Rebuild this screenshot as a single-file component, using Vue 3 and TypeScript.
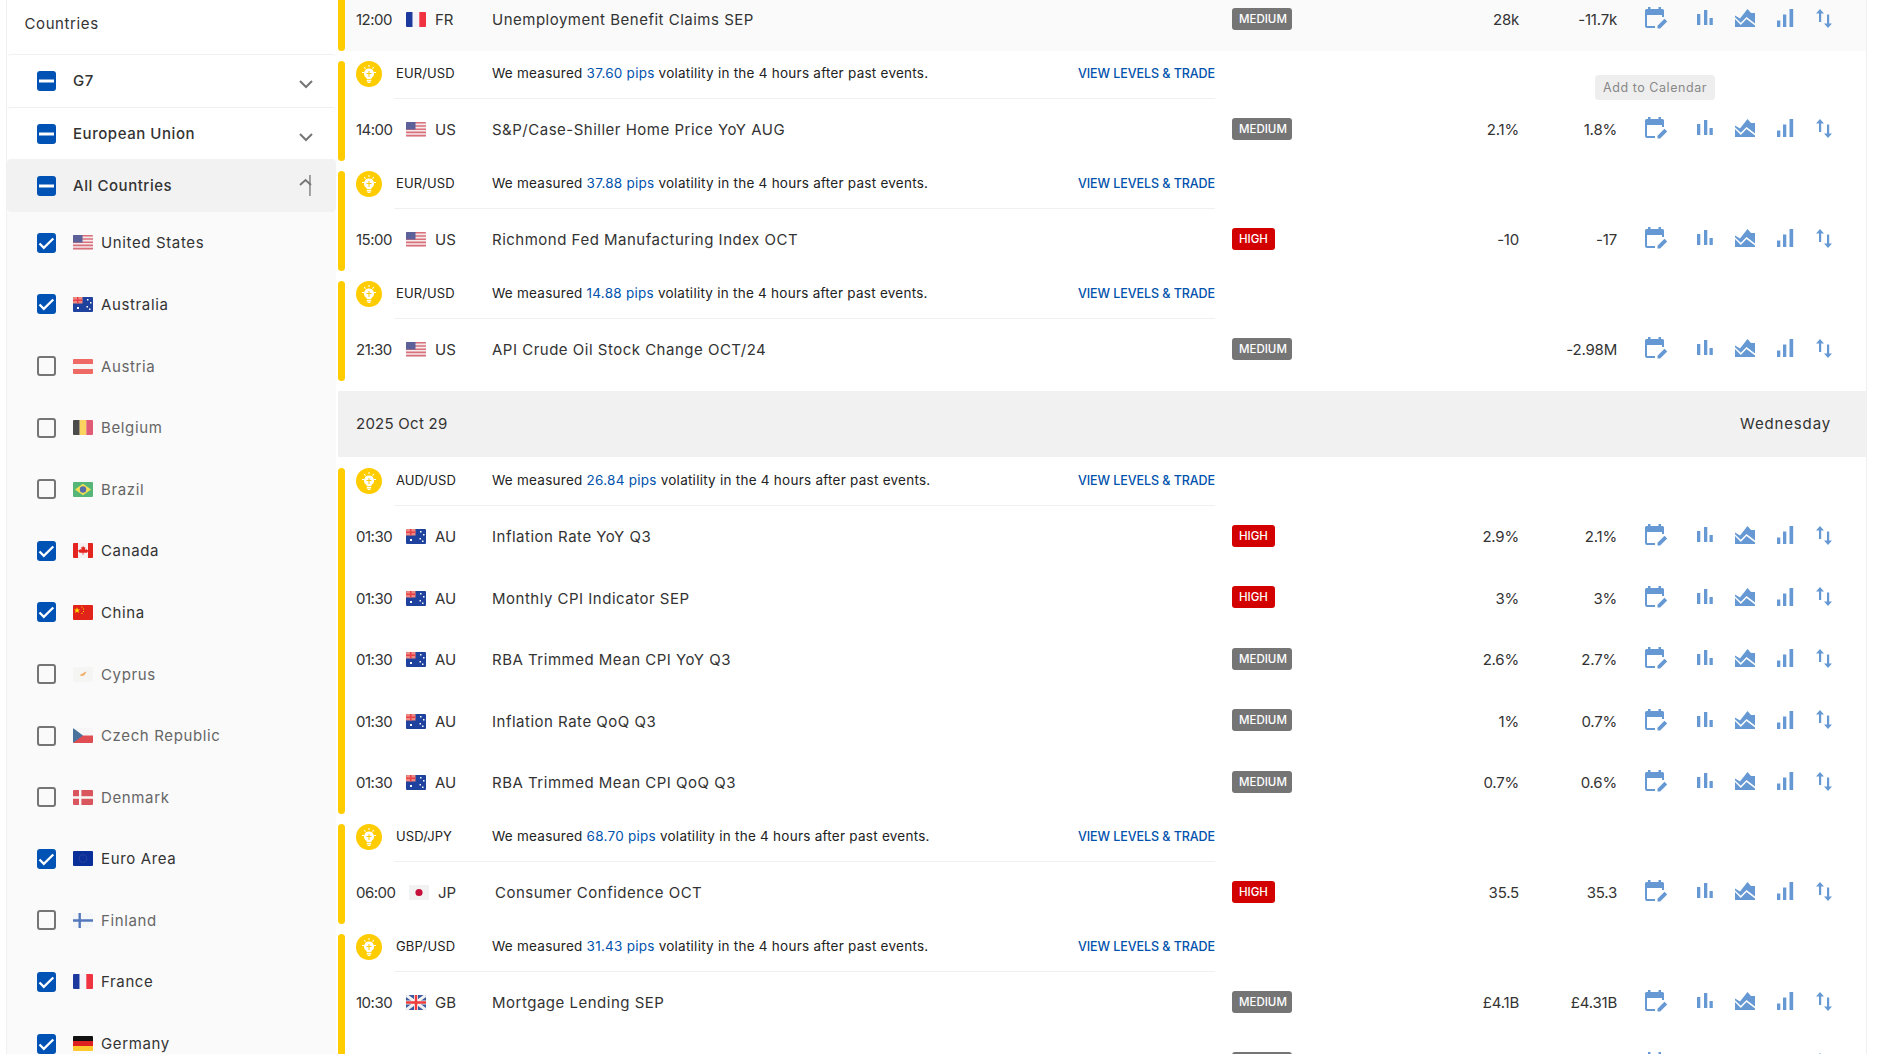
<script setup lang="ts">
type Shape = [string, string]

interface Country {
  code: string
  name: string
  on: boolean
}

interface Row {
  kind: 'event'
  time: string
  code: string
  title: string
  level: 'MEDIUM' | 'HIGH'
  forecast?: string
  prev?: string
  wide?: boolean
  shaded?: boolean
}

interface Tip {
  kind: 'tip'
  pair: string
  pips: string
}

type Item = Row | Tip

const unionJack: Shape[] = [
  ['M0 0h20v15H0z', '#3f5a9e'],
  ['M0 0h2.5L20 13v2h-2.5L0 2zM20 0v2L2.5 15H0v-2L17.5 0z', '#f2f2f2'],
  ['M8 0h4v15H8zM0 5.5h20v4H0z', '#f2f2f2'],
  ['M8.8 0h2.4v15H8.8zM0 6.3h20v2.4H0z', '#ee3b3b'],
]

const stripes: Shape[] = [
  ['M0 0h20v15H0z', '#f4eaea'],
  ['M0 0h20v1.6H0zM0 3.2h20v1.6H0zM0 6.4h20v1.6H0zM0 9.6h20v1.6H0zM0 12.8h20v1.8H0z', '#d9707c'],
  ['M0 0h9.5v7.4H0z', '#5c6199'],
]

const ausFlag: Shape[] = [
  ['M0 0h20v15H0z', '#1f429f'],
  ['M0 0h9.5v6.5H0z', '#ee8a80'],
  ['M4 0h1.5v6.5H4zM0 2.5h9.5V4H0z', '#e8404a'],
  ['M14 2h1.5v1.5H14zM17 5h1.5v1.5H17zM13.5 9h1.5v1.5h-1.5zM16 11.5h1.5V13H16zM4 10h2v2H4z', '#ffffff'],
]

const flags: Record<string, Shape[]> = {
  US: stripes,
  AU: ausFlag,
  GB: unionJack,
  FR: [['M0 0h6.7v15H0z', '#1c3a9e'], ['M6.7 0h6.6v15H6.7z', '#f4f4f8'], ['M13.3 0H20v15h-6.7z', '#ef3340']],
  AT: [['M0 0h20v15H0z', '#f8f4f4'], ['M0 0h20v5H0zM0 10h20v5H0z', '#ec3a32']],
  BE: [['M0 0h6.7v15H0z', '#111111'], ['M6.7 0h6.6v15H6.7z', '#fcc72c'], ['M13.3 0H20v15h-6.7z', '#d8284a']],
  BR: [
    ['M0 0h20v15H0z', '#1ea04c'],
    ['M10 1.8 18 7.5 10 13.2 2 7.5z', '#f7d61e'],
    ['M13.2 7.5a3.2 3.2 0 1 1-6.4 0 3.2 3.2 0 0 1 6.4 0z', '#1f3e8e'],
  ],
  CA: [
    ['M0 0h20v15H0z', '#f6f0f0'],
    ['M0 0h5v15H0zM15 0h5v15h-5z', '#e3241f'],
    ['M10 2.5l1 2 1.4-.6-.5 3 1.6-1 .5 1.2 1.3-.2-.6 2-1 .8H10.4v2h-.8v-2H6.8l-1-.8-.6-2 1.3.2.5-1.2 1.6 1-.5-3 1.4.6z', '#e3241f'],
  ],
  CN: [
    ['M0 0h20v15H0z', '#e2231a'],
    ['M4 2.2l.8 2.2h2.3L5.3 5.8l.7 2.2L4 6.7 2 8l.7-2.2L.9 4.4h2.3z', '#ffde00'],
    ['M8.5 1.5h1v1h-1zM10 3.5h1v1h-1zM10 6h1v1h-1zM8.5 8h1v1h-1z', '#ffde00'],
  ],
  CY: [['M0 0h20v15H0z', '#f4f4f2'], ['M6.5 8c2-.5 4-2.6 7-3.5-.8 2-1.8 4.4-4 4.6-1 .1-2.2-.3-3-1.1z', '#f09a40']],
  CZ: [['M0 0h20v7.5H0z', '#f5f5f7'], ['M0 7.5h20V15H0z', '#d7141a'], ['M0 0l10 7.5L0 15z', '#11457e']],
  DK: [['M0 0h20v15H0z', '#d0202c'], ['M6 0h2.4v15H6zM0 6.3h20v2.4H0z', '#f6f6f6']],
  EA: [
    ['M0 0h20v15H0z', '#0b2f99'],
    ['M10 3.2a4.3 4.3 0 1 1 0 8.6 4.3 4.3 0 0 1 0-8.6zm0 1a3.3 3.3 0 1 0 0 6.6 3.3 3.3 0 0 0 0-6.6z', '#27409a'],
  ],
  FI: [['M0 0h20v15H0z', '#f4f5f8'], ['M5.5 0h2.4v15H5.5zM0 6.3h20v2.4H0z', '#1c4ea8']],
  DE: [['M0 0h20v5H0z', '#111111'], ['M0 5h20v5H0z', '#dd2020'], ['M0 10h20v5H0z', '#fdc92e']],
  JP: [['M0 0h20v15H0z', '#f2f2f2'], ['M13.6 7.5a3.6 3.6 0 1 1-7.2 0 3.6 3.6 0 0 1 7.2 0z', '#c6103c']],
}

const groups: { code: string; name: string; open: boolean }[] = [
  { code: 'g7', name: 'G7', open: false },
  { code: 'eu', name: 'European Union', open: false },
  { code: 'all', name: 'All Countries', open: true },
]

const countries: Country[] = [
  { code: 'US', name: 'United States', on: true },
  { code: 'AU', name: 'Australia', on: true },
  { code: 'AT', name: 'Austria', on: false },
  { code: 'BE', name: 'Belgium', on: false },
  { code: 'BR', name: 'Brazil', on: false },
  { code: 'CA', name: 'Canada', on: true },
  { code: 'CN', name: 'China', on: true },
  { code: 'CY', name: 'Cyprus', on: false },
  { code: 'CZ', name: 'Czech Republic', on: false },
  { code: 'DK', name: 'Denmark', on: false },
  { code: 'EA', name: 'Euro Area', on: true },
  { code: 'FI', name: 'Finland', on: false },
  { code: 'FR', name: 'France', on: true },
  { code: 'DE', name: 'Germany', on: true },
]

// each inner array shares one yellow bar
const day1: Item[][] = [
  [{ kind: 'event', time: '12:00', code: 'FR', title: 'Unemployment Benefit Claims SEP', level: 'MEDIUM', forecast: '28k', prev: '-11.7k', shaded: true }],
  [
    { kind: 'tip', pair: 'EUR/USD', pips: '37.60 pips' },
    { kind: 'event', time: '14:00', code: 'US', title: 'S&P/Case-Shiller Home Price YoY AUG', level: 'MEDIUM', forecast: '2.1%', prev: '1.8%' },
  ],
  [
    { kind: 'tip', pair: 'EUR/USD', pips: '37.88 pips' },
    { kind: 'event', time: '15:00', code: 'US', title: 'Richmond Fed Manufacturing Index OCT', level: 'HIGH', forecast: '-10', prev: '-17' },
  ],
  [
    { kind: 'tip', pair: 'EUR/USD', pips: '14.88 pips' },
    { kind: 'event', time: '21:30', code: 'US', title: 'API Crude Oil Stock Change OCT/24', level: 'MEDIUM', prev: '-2.98M' },
  ],
]

const day2: Item[][] = [
  [
    { kind: 'tip', pair: 'AUD/USD', pips: '26.84 pips' },
    { kind: 'event', time: '01:30', code: 'AU', title: 'Inflation Rate YoY Q3', level: 'HIGH', forecast: '2.9%', prev: '2.1%' },
    { kind: 'event', time: '01:30', code: 'AU', title: 'Monthly CPI Indicator SEP', level: 'HIGH', forecast: '3%', prev: '3%' },
    { kind: 'event', time: '01:30', code: 'AU', title: 'RBA Trimmed Mean CPI YoY Q3', level: 'MEDIUM', forecast: '2.6%', prev: '2.7%' },
    { kind: 'event', time: '01:30', code: 'AU', title: 'Inflation Rate QoQ Q3', level: 'MEDIUM', forecast: '1%', prev: '0.7%' },
    { kind: 'event', time: '01:30', code: 'AU', title: 'RBA Trimmed Mean CPI QoQ Q3', level: 'MEDIUM', forecast: '0.7%', prev: '0.6%' },
  ],
  [
    { kind: 'tip', pair: 'USD/JPY', pips: '68.70 pips' },
    { kind: 'event', time: '06:00', code: 'JP', title: 'Consumer Confidence OCT', level: 'HIGH', forecast: '35.5', prev: '35.3', wide: true },
  ],
  [
    { kind: 'tip', pair: 'GBP/USD', pips: '31.43 pips' },
    { kind: 'event', time: '10:30', code: 'GB', title: 'Mortgage Lending SEP', level: 'MEDIUM', forecast: '£4.1B', prev: '£4.31B' },
    { kind: 'event', time: '', code: '', title: '', level: 'MEDIUM' },
  ],
]
</script>

<template>
  <div class="page">
    <aside class="side">
      <div class="side-head">Countries</div>
      <div v-for="g in groups" :key="g.code" class="group-row" :class="{ open: g.open }">
        <span class="box on">
          <svg width="19" height="20" viewBox="0 0 19 20"><path d="M2 8.500h15v3H2z" fill="#fff" /></svg>
        </span>
        <span class="group-name">{{ g.name }}</span>
        <svg class="chev" width="14" height="24" viewBox="0 0 14 24">
          <template v-if="g.open">
            <path d="M1 11l5.500-5 5.500 5" fill="none" stroke="#757575" stroke-width="1.800" />
            <path d="M10.300 1h1.300v21h-1.300z" fill="#757575" />
          </template>
          <path v-else d="M1 9l6 6 6-6" fill="none" stroke="#757575" stroke-width="2" />
        </svg>
      </div>
      <div class="list">
        <div v-for="c in countries" :key="c.code" class="country" :class="{ off: !c.on }">
          <span class="box" :class="{ on: c.on }">
            <svg v-if="c.on" width="19" height="20" viewBox="0 0 19 20">
              <path d="M2.500 10.500l4.300 4.300 9.500-9.300" fill="none" stroke="#fff" stroke-width="2.300" />
            </svg>
          </span>
          <svg class="flag" width="20" height="15" viewBox="0 0 20 15">
            <path v-for="(s, i) in flags[c.code]" :key="i" :d="s[0]" :fill="s[1]" />
          </svg>
          <span class="country-name">{{ c.name }}</span>
        </div>
      </div>
    </aside>

    <main class="main">
      <div class="tooltip">Add to Calendar</div>
      <div class="feed">
        <template v-for="(day, d) in [day1, day2]" :key="d">
          <div v-if="d === 1" class="date-band">
            <span>2025 Oct 29</span>
            <span class="weekday">Wednesday</span>
          </div>
          <div v-for="(block, b) in day" :key="b" class="block">
            <div class="bar" />
            <div class="block-body">
              <template v-for="(item, n) in block" :key="n">
                <div v-if="item.kind === 'tip'" class="tip">
                  <svg class="bulb" width="26" height="26" viewBox="0 0 26 26">
                    <circle cx="13" cy="13" r="13" fill="#ffcc00" />
                    <path d="M13 7.500a5 5 0 0 1 3 9c-.6.500-.8 1-.8 1.700h-4.400c0-.7-.2-1.200-.8-1.700a5 5 0 0 1 3-9z" fill="#fff" />
                    <path d="M10.800 19h4.400v1.400h-4.400zM11.600 21h2.800v1h-2.800z" fill="#fff" />
                    <path d="M12.500 10h1v6h-1zM10.500 12h5v1h-5z" fill="#ffcc00" />
                    <path d="M12.500 4h1v2h-1zM6 11h2v1H6zM18 11h2v1h-2zM7.800 6.500l.7-.7 1.400 1.400-.7.7zM16.100 7.200l1.400-1.400.7.7-1.400 1.400z" fill="#fff" />
                  </svg>
                  <div class="tip-body">
                    <span class="pair">{{ item.pair }}</span>
                    <span class="msg">We measured <b>{{ item.pips }}</b> volatility in the 4 hours after past events.</span>
                    <span class="trade">VIEW LEVELS &amp; TRADE</span>
                  </div>
                </div>
                <div v-else class="event" :class="{ shaded: item.shaded, wide: item.wide }">
                  <span class="time">{{ item.time }}</span>
                  <svg class="flag" width="20" height="15" viewBox="0 0 20 15">
                    <path v-for="(s, i) in flags[item.code]" :key="i" :d="s[0]" :fill="s[1]" />
                  </svg>
                  <span class="code">{{ item.code }}</span>
                  <span class="title">{{ item.title }}</span>
                  <span class="level-cell">
                    <span class="level" :class="item.level === 'HIGH' ? 'high' : 'medium'">{{ item.level }}</span>
                  </span>
                  <span class="val forecast">{{ item.forecast }}</span>
                  <span class="val prev">{{ item.prev }}</span>
                  <span class="tools">
                    <svg class="ic-cal" width="24" height="24" viewBox="0 0 24 24">
                      <path d="M4 1h2.500v3H4zM14.500 1H17v3h-2.500z" fill="#6699d3" />
                      <path d="M2.500 3H18.500A1.500 1.500 0 0 1 20 4.500V9H1V4.500A1.500 1.500 0 0 1 2.500 3z" fill="#6699d3" />
                      <path d="M2 8v12a1 1 0 0 0 1 1h8M19 8v3" fill="none" stroke="#6699d3" stroke-width="2" />
                      <path d="M13.500 22.500v-2.700l7-7 2.700 2.700-7 7z" fill="#6699d3" />
                    </svg>
                    <svg class="ic-bars" width="16" height="16" viewBox="0 0 16 16">
                      <path d="M0 4h3.300v11H0zM7 0h3.300v15H7zM12.500 8h3.300v7h-3.300z" fill="#6699d3" />
                    </svg>
                    <svg class="ic-area" width="20" height="18" viewBox="0 0 20 18">
                      <path d="M0 6.500L5 9.500 12.500 0 16 4H20V14.500L11.500 8 5.800 13.800 0 8.200z" fill="#6699d3" />
                      <path d="M0 10L5.800 16 11.500 10 20 16.500V18H0z" fill="#6699d3" />
                    </svg>
                    <svg class="ic-signal" width="17" height="18" viewBox="0 0 17 18">
                      <path d="M0 11.500h3.300V18H0zM6 5.500h3.300V18H6zM12.500 0h3.700v18h-3.700z" fill="#6699d3" />
                    </svg>
                    <svg class="ic-arrows" width="16" height="19" viewBox="0 0 16 19">
                      <path d="M4 0l4 4.500H5.200V13H3V4.500H0zM11 5.500h2.200V14.500H16L12 19 8 14.500h3z" fill="#6699d3" />
                    </svg>
                  </span>
                </div>
              </template>
            </div>
          </div>
        </template>
      </div>
    </main>
  </div>
</template>

<style scoped>
.page {
  display: flex;
  height: 1054px;
  overflow: hidden;
  padding: 0 14px 0 6px;
  box-sizing: border-box;
  background: #fff;
  font-family: Inter, 'Open Sans', sans-serif;
  color: #333;
}

.side {
  width: 330px;
  flex: none;
  border-left: 1px solid #f0f0f0;
  box-sizing: border-box;
}

.side-head {
  height: 54px;
  padding: 13px 0 0 17.500px;
  box-sizing: border-box;
  font-size: 15px;
  line-height: 22px;
  letter-spacing: 0.6px;
}

.group-row {
  height: 52.700px;
  display: flex;
  align-items: center;
  padding: 0 23px 0 30px;
  box-sizing: border-box;
  border-top: 1px solid #f0f0f0;
  border-radius: 4px;
}

.group-row.open {
  background: #f2f2f2;
  border-top: 0;
}

.box {
  width: 19px;
  height: 20px;
  flex: none;
  box-sizing: border-box;
  border: 2px solid #757575;
  border-radius: 3px;
}

.box.on {
  background: #0052b4;
  border: 0;
}

.box svg {
  display: block;
}

.group-name {
  margin: -1px 0 0 17px;
  font-size: 15px;
  font-weight: 500;
  letter-spacing: 0.55px;
}

.chev {
  margin-left: auto;
  margin-top: 6px;
}

.group-row.open .chev {
  margin-top: 0;
}

.list {
  background: #fafafa;
}

.country {
  height: 61.600px;
  display: flex;
  align-items: center;
  padding-left: 30px;
}

.country .flag {
  margin-left: 17px;
}

.country-name {
  margin-left: 8px;
  font-size: 15px;
  letter-spacing: 0.630px;
}

.country.off .country-name {
  color: #666;
}

.country.off .flag {
  opacity: 0.75;
}

.flag {
  flex: none;
  border-radius: 1px;
}

.main {
  flex: 1;
  min-width: 0;
  margin-left: 2px;
  border-right: 1px solid #f0f0f0;
  position: relative;
}

.feed {
  margin-top: -11px;
}

.tooltip {
  position: absolute;
  z-index: 2;
  left: 1257px;
  top: 75px;
  width: 120px;
  height: 25px;
  border-radius: 4px;
  background: #eee;
  color: #888;
  font-size: 12.500px;
  letter-spacing: 0.55px;
  line-height: 25px;
  text-align: center;
}

.block {
  display: flex;
  margin-bottom: 10.500px;
}

.bar {
  width: 7px;
  flex: none;
  background: #ffcc00;
  border-radius: 4px;
}

.block-body {
  flex: 1;
  min-width: 0;
}

.tip {
  height: 38px;
  display: flex;
  padding-left: 11px;
}

.bulb {
  flex: none;
}

.tip-body {
  width: 821px;
  margin-left: 12px;
  padding-left: 2px;
  box-sizing: border-box;
  display: flex;
  border-bottom: 1px solid #f0f0f0;
  line-height: 25px;
  font-size: 13px;
  color: #222;
}

.pair {
  width: 96px;
  flex: none;
  letter-spacing: 0.1px;
}

.msg {
  flex: 1;
  font-size: 13.500px;
  letter-spacing: 0.25px;
}

.msg b {
  font-weight: 400;
  color: #0052ac;
}

.trade {
  font-size: 12.500px;
  font-weight: 500;
  color: #0052ac;
  letter-spacing: -0.070px;
}

.event {
  height: 61.500px;
  display: flex;
  align-items: center;
  padding-left: 11px;
  font-size: 15px;
}

.event.shaded {
  background: #fafafa;
}

.time {
  width: 50px;
  flex: none;
  letter-spacing: -0.5px;
}

.event.wide .time {
  width: 53px;
}

.code {
  width: 57px;
  margin-left: 9px;
  flex: none;
}

.title {
  width: 740px;
  flex: none;
  letter-spacing: 0.5px;
}

.event.wide .title {
  width: 737px;
}

.level-cell {
  width: 200px;
  flex: none;
  display: flex;
  margin-top: -2px;
}

.level {
  height: 22px;
  padding: 0 7px;
  box-sizing: border-box;
  border-radius: 3px;
  color: #fff;
  font-size: 11.500px;
  font-weight: 500;
  line-height: 22px;
}

.level.medium {
  width: 60px;
  background: #757575;
}

.level.high {
  width: 43px;
  background: #d30000;
}

.val {
  text-align: right;
  flex: none;
  letter-spacing: -0.2px;
}

.forecast {
  width: 87px;
}

.prev {
  width: 98px;
}

.tools {
  display: flex;
  align-items: center;
  margin-left: 27px;
  margin-top: -3px;
}

.tools svg {
  flex: none;
}

.ic-bars {
  margin-left: 29px;
}

.ic-area {
  margin-left: 22px;
}

.ic-signal {
  margin-left: 22px;
}

.ic-arrows {
  margin-left: 22px;
}

.date-band {
  height: 66px;
  margin-bottom: 11px;
  display: flex;
  align-items: center;
  justify-content: space-between;
  padding: 0 35px 2px 18px;
  box-sizing: border-box;
  background: #f1f1f1;
  font-size: 15px;
  letter-spacing: 0.25px;
}

.weekday {
  letter-spacing: 0.850px;
}
</style>

<style>
html,
body {
  margin: 0;
  overflow: hidden;
}
</style>
